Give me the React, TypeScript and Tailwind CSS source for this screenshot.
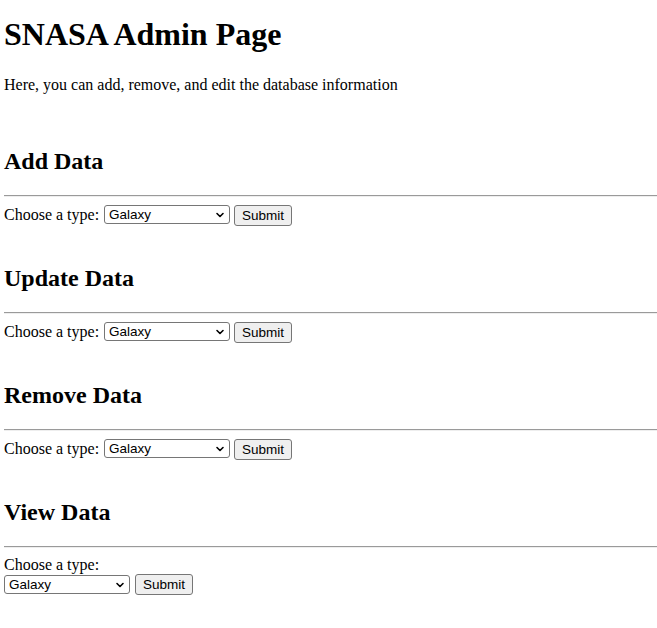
import { ChevronDown } from 'lucide-react';

const SECTIONS = ['Add Data', 'Update Data', 'Remove Data', 'View Data'];

function TypeSelect() {
  return (
    <span className="relative inline-flex">
      <select
        defaultValue="Galaxy"
        className="appearance-none w-[126px] h-[19px] border border-[#767676] rounded-[3px] bg-white pl-[4px] text-[13.5px] leading-[17px] text-black font-['Liberation_Sans',Arial,sans-serif]"
      >
        <option>Galaxy</option>
        <option>Star</option>
        <option>Planet</option>
      </select>
      <ChevronDown size={12} strokeWidth={3.2} className="absolute right-[4px] top-[4px] pointer-events-none text-black" />
    </span>
  );
}

function SubmitButton() {
  return (
    <button
      type="button"
      className="w-[58px] h-[21px] border border-[#767676] rounded-[3px] bg-[#efefef] text-[13.5px] leading-[19px] text-black font-['Liberation_Sans',Arial,sans-serif]"
    >
      Submit
    </button>
  );
}

function Section({ title, stacked }: { title: string; stacked?: boolean }) {
  return (
    <div className="mt-[39px] first:mt-[53px]">
      <h2 className="text-[24px] leading-[28px] font-bold">{title}</h2>
      <div className="mt-[20px] h-[2px] border-t border-t-[#9a9a9a] border-b border-b-[#eeeeee]" />
      {stacked ? (
        <div className="mt-[8px]">
          <div className="text-[16px] leading-[18px]">Choose a type:</div>
          <div className="flex items-center gap-[5px] h-[20px]">
            <TypeSelect />
            <SubmitButton />
          </div>
        </div>
      ) : (
        <div className="mt-[7px] flex items-center h-[21px] text-[16px]">
          <span className="mr-[5px]">Choose a type:</span>
          <TypeSelect />
          <span className="ml-[4px]"><SubmitButton /></span>
        </div>
      )}
    </div>
  );
}

export default function App() {
  return (
    <div className="min-h-screen bg-white text-black pl-[4px] pt-[16px] font-['Liberation_Serif','Times_New_Roman',serif]">
      <h1 className="text-[32px] leading-[37px] font-bold">SNASA Admin Page</h1>
      <p className="mt-[23px] text-[16px] leading-[18px]">Here, you can add, remove, and edit the database information</p>
      <div>
        {SECTIONS.map((s, i) => (
          <Section key={s} title={s} stacked={i === SECTIONS.length - 1} />
        ))}
      </div>
    </div>
  );
}
